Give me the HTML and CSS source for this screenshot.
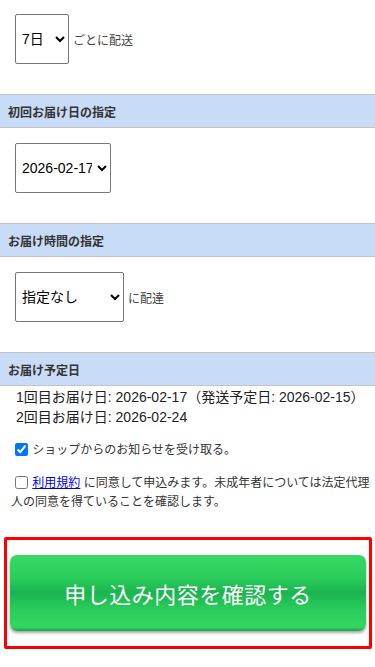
FILE: index.html
```html
<!DOCTYPE html>
<html lang="ja">
<head>
<meta charset="utf-8">
<meta name="viewport" content="width=device-width, initial-scale=1">
<link rel="stylesheet" href="styles.css">
</head>
<body>
<div class="field first">
  <select class="sel sel-interval"><option>7日</option><option>14日</option></select>
  <span class="suffix">ごとに配送</span>
</div>
<div class="head">初回お届け日の指定</div>
<div class="field">
  <select class="sel sel-date"><option>2026-02-17</option></select>
</div>
<div class="head">お届け時間の指定</div>
<div class="field">
  <select class="sel sel-time"><option>指定なし</option><option>午前中</option></select>
  <span class="suffix">に配達</span>
</div>
<div class="head">お届け予定日</div>
<div class="schedule">
  <p class="line">1回目お届け日: 2026-02-17（発送予定日: 2026-02-15）</p>
  <p class="line">2回目お届け日: 2026-02-24</p>
</div>
<div class="checks">
  <label class="check"><input type="checkbox" checked> ショップからのお知らせを受け取る。</label>
  <label class="check terms"><input type="checkbox"> <a href="#">利用規約</a> に同意して申込みます。未成年者については法定代理人の同意を得ていることを確認します。</label>
</div>
<div class="submit-frame">
  <button class="submit" type="button">申し込み内容を確認する</button>
</div>
</body>
</html>
```
FILE: styles.css
```css
html, body {
  margin: 0;
  padding: 0;
  background: #fff;
}
body {
  font-family: "Liberation Sans", "Noto Sans CJK JP", sans-serif;
  color: #333;
  width: 375px;
}
.field {
  display: flex;
  align-items: center;
  gap: 4px;
  padding: 15px 15px 30px;
}
.field.first {
  padding-top: 14px;
}
.sel {
  height: 50px;
  font-family: "Liberation Sans", "Noto Sans CJK JP", sans-serif;
  font-size: 14px;
  color: #000;
  background: #fff;
  border: 1px solid #767676;
  border-radius: 2px;
  padding: 0 2px;
  margin: 0;
}
.sel-interval { width: 54px; }
.sel-date { width: 96px; }
.sel-time { width: 109px; }
.suffix {
  font-size: 12px;
  color: #444;
}
.head {
  height: 32px;
  display: flex;
  align-items: center;
  padding-left: 8px;
  background: #c9dcf7;
  border-top: 1px solid #c4c4c4;
  border-bottom: 1px solid #c4c4c4;
  font-size: 12px;
  font-weight: bold;
  color: #333;
}
.schedule {
  padding: 1px 15px 0 16px;
}
.line {
  margin: 0;
  font-size: 14px;
  line-height: 20px;
  color: #222;
  white-space: nowrap;
}
.checks {
  padding: 14px 4px 0 11px;
  display: flex;
  flex-direction: column;
  gap: 14px;
}
.check {
  display: block;
  font-size: 12px;
  line-height: 19px;
  color: #333;
}
.check input {
  margin: 0 1px 0 4px;
  width: 13px;
  height: 13px;
  vertical-align: -2px;
}
.check a {
  color: #0000ee;
  text-decoration: underline;
}
.submit-frame {
  margin: 25px 3px 0 4px;
  border: 3px solid #ff0000;
  border-radius: 2px;
  padding: 15px 3px 15px;
}
.submit {
  display: block;
  width: 100%;
  height: 76px;
  border: none;
  border-radius: 7px;
  background: linear-gradient(to bottom, #38d864 0%, #2bcd5b 30%, #1ab450 50%, #2bcd5b 72%, #35d660 95%, #1e9f48 100%);
  box-shadow: 0 2px 3px rgba(0,0,0,0.35);
  color: #fff;
  font-family: "Noto Sans CJK JP", sans-serif;
  font-size: 22px;
  letter-spacing: 0.5px;
  padding: 0;
}
```
